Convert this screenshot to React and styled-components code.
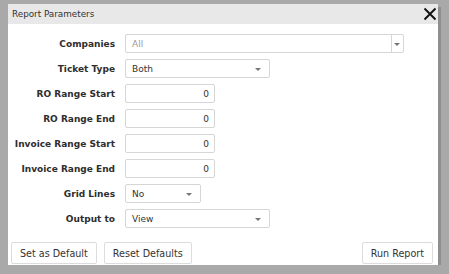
import styled, { createGlobalStyle } from "styled-components";

const Global = createGlobalStyle`
  body {
    margin: 0;
    background: #a9a9a9;
    font-family: "DejaVu Sans", Verdana, sans-serif;
  }
`

const Dialog = styled.div`
  margin: 4px 0 0 8px;
  width: 430px;
  height: 261px;
  background: #fff;
  box-shadow: 3px 3px 0 #8f8f8f;
  display: flex;
  flex-direction: column;
`

const TitleBar = styled.div`
  height: 20px;
  background: #e8e8e8;
  display: flex;
  align-items: center;
  justify-content: space-between;
  padding: 0 0 0 4px;
  font-size: 8.8px;
  color: #333;
`

const Close = styled.button`
  border: 0;
  background: none;
  padding: 0;
  width: 16px;
  height: 16px;
  display: flex;
  align-items: center;
  justify-content: center;
`

const Form = styled.div`
  display: grid;
  grid-template-columns: 107px auto;
  column-gap: 10px;
  row-gap: 6px;
  padding-top: 10px;
  align-items: center;
  justify-items: start;
`

const Label = styled.div`
  justify-self: end;
  font-weight: bold;
  font-size: 9px;
  color: #2e2e2e;
`

const Field = styled.div`
  position: relative;
  width: ${(props) => props.w}px;
  height: 19px;
  box-sizing: border-box;
  border: 1px solid #d6d6d6;
  border-radius: 2px;
  display: flex;
  align-items: center;
  justify-content: ${(props) => (props.num ? "flex-end" : "flex-start")};
  padding: 0 ${(props) => (props.num ? "5px" : "6px")};
  font-size: 9px;
  color: ${(props) => (props.muted ? "#9a9a9a" : "#333")};
`

const Arrow = styled.div`
  position: absolute;
  right: ${(props) => props.r || 8}px;
  top: 8px;
  width: 0;
  height: 0;
  border-left: 3px solid transparent;
  border-right: 3px solid transparent;
  border-top: 3px solid #777;
`

const Divider = styled.div`
  position: absolute;
  right: 11px;
  top: 0;
  bottom: 0;
  border-left: 1px solid #d6d6d6;
`

const Footer = styled.div`
  margin-top: auto;
  display: flex;
  gap: 7px;
  padding: 0 5px 1px 3px;
`

const Button = styled.button`
  height: 22px;
  box-sizing: border-box;
  padding: 0 8px;
  border: 1px solid #dcdcdc;
  border-radius: 2px;
  background: #fff;
  font-family: "DejaVu Sans", Verdana, sans-serif;
  font-size: 9.6px;
  color: #333;
  margin-left: ${(props) => (props.push ? "auto" : "0")};
`

function Select({ w, value, muted, split }) {
  return (
    <Field w={w} muted={muted}>
      {value}
      {split && <Divider />}
      <Arrow r={split ? 3 : 8} />
    </Field>
  );
}

function App() {
  return (
    <>
      <Global />
      <Dialog>
        <TitleBar>
          <span>Report Parameters</span>
          <Close>
            <svg width="14" height="14" viewBox="0 0 14 14">
              <path d="M1.5 1.5L12.5 12.5M12.5 1.5L1.5 12.5" stroke="#111" strokeWidth="1.9" />
            </svg>
          </Close>
        </TitleBar>
        <Form>
          <Label>Companies</Label>
          <Select w={279} value="All" muted split />
          <Label>Ticket Type</Label>
          <Select w={145} value="Both" />
          <Label>RO Range Start</Label>
          <Field w={90} num>0</Field>
          <Label>RO Range End</Label>
          <Field w={90} num>0</Field>
          <Label>Invoice Range Start</Label>
          <Field w={90} num>0</Field>
          <Label>Invoice Range End</Label>
          <Field w={90} num>0</Field>
          <Label>Grid Lines</Label>
          <Select w={76} value="No" />
          <Label>Output to</Label>
          <Select w={145} value="View" />
        </Form>
        <Footer>
          <Button>Set as Default</Button>
          <Button>Reset Defaults</Button>
          <Button push>Run Report</Button>
        </Footer>
      </Dialog>
    </>
  );
}

export default App;
